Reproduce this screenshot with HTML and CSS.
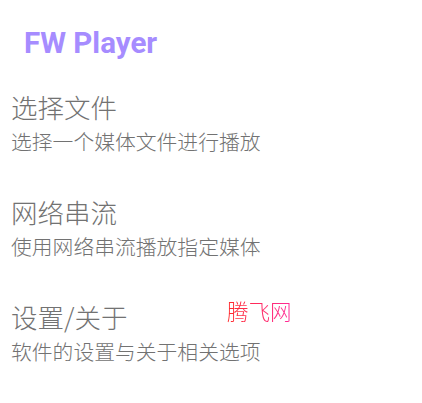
FILE: index.html
```html
<!DOCTYPE html>
<html lang="zh-CN">
<head>
<meta charset="utf-8">
<link rel="stylesheet" href="styles.css">
</head>
<body>
<div class="app">
  <header class="appbar">FW Player</header>
  <ul class="menu">
    <li class="item">
      <div class="item-title">选择文件</div>
      <div class="item-sub">选择一个媒体文件进行播放</div>
    </li>
    <li class="item">
      <div class="item-title">网络串流</div>
      <div class="item-sub">使用网络串流播放指定媒体</div>
    </li>
    <li class="item">
      <div class="item-title">设置/关于</div>
      <div class="item-sub">软件的设置与关于相关选项</div>
    </li>
  </ul>
  <div class="watermark">腾飞网</div>
</div>
</body>
</html>
```
FILE: styles.css
```css
html, body {
  margin: 0;
  padding: 0;
  background: #ffffff;
}
.app {
  position: relative;
  width: 422px;
  height: 403px;
  font-family: Roboto, "Noto Sans CJK SC", sans-serif;
}
.appbar {
  padding: 26px 0 0 24px;
  height: 40px;
  font-size: 29.5px;
  line-height: 34px;
  font-weight: 700;
  color: #a68cff;
}
.menu {
  list-style: none;
  margin: 0;
  padding: 0 0 0 11px;
}
.item {
  height: 105px;
  display: flex;
  flex-direction: column;
}
.item-title {
  font-family: "Noto Sans CJK SC", sans-serif;
  font-weight: 300;
  font-size: 26.5px;
  line-height: 32px;
  color: #727272;
  margin-top: 25px;
}
.item-sub {
  font-family: "Noto Sans CJK SC", sans-serif;
  font-weight: 300;
  font-size: 20.8px;
  line-height: 26px;
  color: #727272;
  margin-top: 5px;
}
.watermark {
  position: absolute;
  left: 227px;
  top: 297px;
  font-family: "Noto Sans CJK SC", sans-serif;
  font-weight: 300;
  font-size: 21.5px;
  line-height: 28px;
  background: linear-gradient(90deg, #ff2a2a, #ff2a9a);
  -webkit-background-clip: text;
  background-clip: text;
  color: transparent;
}
```
